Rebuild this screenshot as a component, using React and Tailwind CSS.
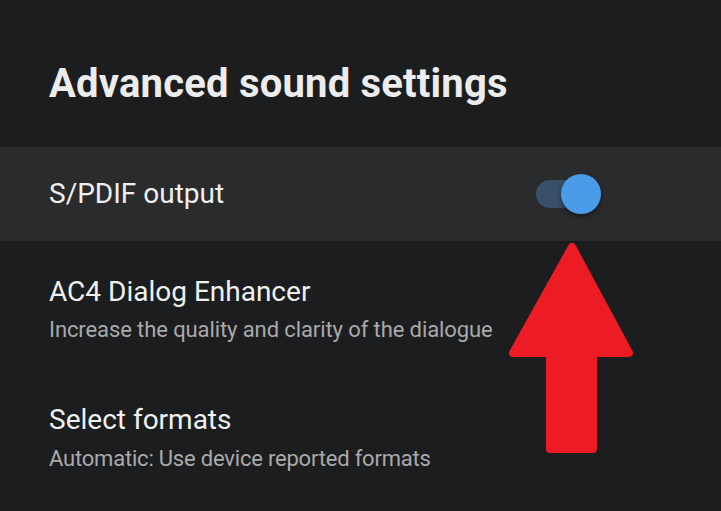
import React from "react";

export default function App() {
  return (
    <div className="relative w-[721px] h-[511px] overflow-hidden bg-[#1c1d1f] text-white" style={{ fontFamily: "Roboto, 'Noto Sans', sans-serif" }}>
      <div className="h-[147px] pl-[49px] pt-[60px]">
        <h1 className="text-[40px] leading-[48px] font-bold text-[#ececec] tracking-[0.2px]">Advanced sound settings</h1>
      </div>
      <div className="h-[94px] bg-[#2a2b2d] pl-[49px] pr-[119px] flex items-center justify-between">
        <span className="text-[28px] leading-[32px] text-[#f0f0f0]">S/PDIF output</span>
        <div className="relative w-[66px] h-[40px] flex items-center">
          <div className="w-[48px] h-[28px] rounded-full bg-[#3a5068]" />
          <div className="absolute left-[25px] top-0 w-[40px] h-[40px] rounded-full bg-[#4a9be8] shadow-[0_2px_4px_rgba(0,0,0,0.5)]" />
        </div>
      </div>
      <div className="pl-[49px] pt-[35px] h-[128px]">
        <div className="text-[28px] leading-[32px] text-[#f0f0f0]">AC4 Dialog Enhancer</div>
        <div className="text-[22px] leading-[28px] mt-[8px] text-[#a9aaab] tracking-[-0.1px]">Increase the quality and clarity of the dialogue</div>
      </div>
      <div className="pl-[49px] pt-[35px]">
        <div className="text-[28px] leading-[32px] text-[#f0f0f0]">Select formats</div>
        <div className="text-[22px] leading-[28px] mt-[9px] text-[#a9aaab] tracking-[-0.2px]">Automatic: Use device reported formats</div>
      </div>
      <svg className="absolute left-0 top-0" width="721" height="511" viewBox="0 0 721 511">
        <path
          d="M572 247 L629 353 L593 353 L593 449 L550 449 L550 353 L513 353 Z"
          fill="#ed1c24"
          stroke="#ed1c24"
          strokeWidth="8"
          strokeLinejoin="round"
        />
      </svg>
    </div>
  );
}
